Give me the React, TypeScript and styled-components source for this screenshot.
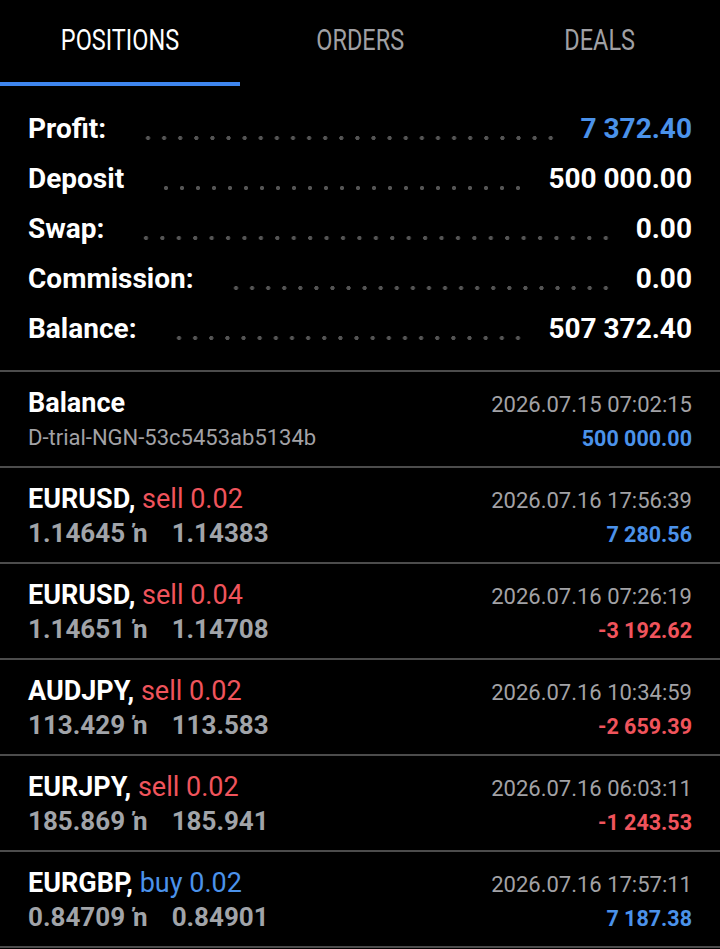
import React from 'react'
import styled, { createGlobalStyle } from 'styled-components'

const Global = createGlobalStyle`
  body {
    margin: 0;
    background: #000;
    font-family: Roboto, 'Liberation Sans', sans-serif;
  }
`

const BLUE = '#4b92ea'
const RED = '#f0545c'

const Root = styled.div`
  width: 720px;
  min-height: 949px;
  background: #000;
  color: #fff;
  overflow: hidden;
`

const Tabs = styled.div`
  display: grid;
  grid-template-columns: repeat(3, 1fr);
  height: 86px;
`

const Tab = styled.div<{ $active?: boolean }>`
  display: flex;
  justify-content: center;
  padding-top: 23px;
  box-sizing: border-box;
  font-size: 29px;
  line-height: 34px;
  color: ${p => (p.$active ? '#fff' : '#a0a0a4')};
  border-bottom: 4px solid ${p => (p.$active ? '#3f86ee' : 'transparent')};
`

// the tab labels are a narrow face; squeeze Roboto to fit
const TabLabel = styled.span`
  display: inline-block;
  transform: scaleX(0.81);
`

const Summary = styled.div`
  padding: 17px 28px 17px 28px;
  border-bottom: 2px solid #4c4c4c;
`

const SumRow = styled.div`
  display: flex;
  align-items: center;
  height: 50px;
  font-size: 28px;
  font-weight: 700;
`

const Leader = styled.div`
  flex: 1;
  align-self: stretch;
  margin: 0 22px 0 34px;
  background-image: radial-gradient(circle, #555 1.8px, transparent 2.4px);
  background-size: 16px 16px;
  background-repeat: space no-repeat;
  background-position: 0 27px;
`

const SumValue = styled.span<{ $color?: string }>`
  color: ${p => p.$color || '#fff'};
`

const Row = styled.div`
  display: flex;
  justify-content: space-between;
  height: 96px;
  padding: 14px 28px 0 28px;
  box-sizing: border-box;
  border-bottom: 2px solid #4c4c4c;
`

const Col = styled.div<{ $right?: boolean }>`
  display: flex;
  flex-direction: column;
  align-items: ${p => (p.$right ? 'flex-end' : 'flex-start')};
  padding-top: ${p => (p.$right ? '2px' : '0')};
`

const Title = styled.div`
  font-size: 27px;
  font-weight: 700;
  line-height: 34px;
  white-space: pre;
`

const Side = styled.span<{ $buy?: boolean }>`
  font-weight: 400;
  color: ${p => (p.$buy ? BLUE : RED)};
`

const Sub = styled.div`
  font-size: 22px;
  line-height: 35px;
  color: #a2a2a6;
`

const Prices = styled.div`
  display: flex;
  font-size: 26px;
  font-weight: 700;
  line-height: 35px;
  color: #a1a4a9;
`

const Arrow = styled.span`
  margin: 0 24px 0 8px;
`

const Date = styled.div`
  font-size: 22px;
  line-height: 34px;
  color: #a2a2a6;
`

const Amount = styled.div<{ $neg?: boolean }>`
  font-size: 21.5px;
  font-weight: 700;
  line-height: 34px;
  color: ${p => (p.$neg ? RED : BLUE)};
`

const summary = [
  { label: 'Profit:', value: '7 372.40', color: BLUE },
  { label: 'Deposit', value: '500 000.00' },
  { label: 'Swap:', value: '0.00' },
  { label: 'Commission:', value: '0.00' },
  { label: 'Balance:', value: '507 372.40' },
]

const trades = [
  { sym: 'EURUSD', side: 'sell', vol: '0.02', open: '1.14645', close: '1.14383', time: '2026.07.16 17:56:39', profit: '7 280.56' },
  { sym: 'EURUSD', side: 'sell', vol: '0.04', open: '1.14651', close: '1.14708', time: '2026.07.16 07:26:19', profit: '-3 192.62' },
  { sym: 'AUDJPY', side: 'sell', vol: '0.02', open: '113.429', close: '113.583', time: '2026.07.16 10:34:59', profit: '-2 659.39' },
  { sym: 'EURJPY', side: 'sell', vol: '0.02', open: '185.869', close: '185.941', time: '2026.07.16 06:03:11', profit: '-1 243.53' },
  { sym: 'EURGBP', side: 'buy', vol: '0.02', open: '0.84709', close: '0.84901', time: '2026.07.16 17:57:11', profit: '7 187.38' },
]

export default function App() {
  return (
    <Root>
      <Global />
      <Tabs>
        <Tab $active><TabLabel>POSITIONS</TabLabel></Tab>
        <Tab><TabLabel>ORDERS</TabLabel></Tab>
        <Tab><TabLabel>DEALS</TabLabel></Tab>
      </Tabs>

      <Summary>
        {summary.map(s => (
          <SumRow key={s.label}>
            <span>{s.label}</span>
            <Leader />
            <SumValue $color={s.color}>{s.value}</SumValue>
          </SumRow>
        ))}
      </Summary>

      <Row>
        <Col>
          <Title>Balance</Title>
          <Sub>D-trial-NGN-53c5453ab5134b</Sub>
        </Col>
        <Col $right>
          <Date>2026.07.15 07:02:15</Date>
          <Amount>500 000.00</Amount>
        </Col>
      </Row>

      {trades.map((t, i) => (
        <Row key={i}>
          <Col>
            <Title>
              {t.sym}, <Side $buy={t.side === 'buy'}>{t.side} {t.vol}</Side>
            </Title>
            <Prices>
              {t.open}
              <Arrow>ŉ</Arrow>
              {t.close}
            </Prices>
          </Col>
          <Col $right>
            <Date>{t.time}</Date>
            <Amount $neg={t.profit.startsWith('-')}>{t.profit}</Amount>
          </Col>
        </Row>
      ))}
    </Root>
  )
}
